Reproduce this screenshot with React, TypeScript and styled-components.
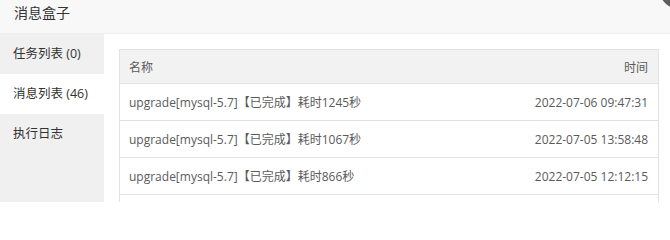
import React from 'react';
import styled, { createGlobalStyle } from 'styled-components';

const GlobalStyle = createGlobalStyle`
  html, body {
    margin: 0;
    padding: 0;
    background: #fff;
    overflow: hidden;
  }
  body {
    font-family: "Open Sans", "Noto Sans CJK SC", sans-serif;
    color: #333;
  }
`;

interface Message {
  title: string;
  time: string;
}

const messages: Message[] = [
  { title: 'upgrade[mysql-5.7]【已完成】耗时1245秒', time: '2022-07-06 09:47:31' },
  { title: 'upgrade[mysql-5.7]【已完成】耗时1067秒', time: '2022-07-05 13:58:48' },
  { title: 'upgrade[mysql-5.7]【已完成】耗时866秒', time: '2022-07-05 12:12:15' },
];

const tabs = ['任务列表 (0)', '消息列表 (46)', '执行日志'];

function App() {
  const active = 1;
  return (
    <>
      <GlobalStyle />
      <Layer>
        <Header>消息盒子</Header>
        <CloseDot />
        <Body>
          <Sidebar>
            {tabs.map((t, i) => (
              <Tab key={t} $active={i === active}>{t}</Tab>
            ))}
          </Sidebar>
          <Content>
            <TableBox>
              <Table>
                <thead>
                  <tr>
                    <Th>名称</Th>
                    <Th $right>时间</Th>
                  </tr>
                </thead>
                <tbody>
                  {messages.map((m, i) => (
                    <tr key={i}>
                      <Td>{m.title}</Td>
                      <Td $right>{m.time}</Td>
                    </tr>
                  ))}
                </tbody>
              </Table>
            </TableBox>
          </Content>
        </Body>
      </Layer>
    </>
  );
}

const Layer = styled.div`
  position: relative;
  width: 670px;
  height: 202px;
  overflow: hidden;
  background: #fff;
  display: flex;
  flex-direction: column;
`;

const Header = styled.div`
  height: 33px;
  line-height: 26px;
  padding-left: 14px;
  background: #f8f8f8;
  border-bottom: 1px solid #eee;
  font-size: 14px;
  color: #333;
  flex-shrink: 0;
`;

const CloseDot = styled.div`
  position: absolute;
  top: -38px;
  right: -36px;
  width: 48px;
  height: 48px;
  border-radius: 50%;
  background: #5e5e5e;
`;

const Body = styled.div`
  display: flex;
  flex: 1;
  min-height: 0;
`;

const Sidebar = styled.div`
  width: 104px;
  flex-shrink: 0;
  background: #f0f0f0;
  display: flex;
  flex-direction: column;
`;

const Tab = styled.div<{ $active?: boolean }>`
  height: 40px;
  line-height: 40px;
  padding-left: 13px;
  font-size: 12.5px;
  color: #333;
  white-space: nowrap;
  background: ${p => (p.$active ? '#fff' : 'transparent')};
`;

const Content = styled.div`
  flex: 1;
  display: flex;
  padding: 15px 11px 0 15px;
`;

const TableBox = styled.div`
  flex: 1;
  border-left: 1px solid #e2e2e2;
  border-right: 1px solid #e2e2e2;
`;

const Table = styled.table`
  width: 100%;
  border-collapse: collapse;
  font-size: 12px;
  color: #5a5a5a;
`;

const Th = styled.th<{ $right?: boolean }>`
  height: 33px;
  padding: 0 10px 0 9px;
  font-weight: normal;
  text-align: ${p => (p.$right ? 'right' : 'left')};
  background: #f2f2f2;
  border-top: 1px solid #e2e2e2;
  border-bottom: 1px solid #e2e2e2;
  color: #5a5a5a;
`;

const Td = styled.td<{ $right?: boolean }>`
  height: 36px;
  padding: 0 10px 0 9px;
  text-align: ${p => (p.$right ? 'right' : 'left')};
  border-bottom: 1px solid #e2e2e2;
  white-space: nowrap;
`;

export default App;
